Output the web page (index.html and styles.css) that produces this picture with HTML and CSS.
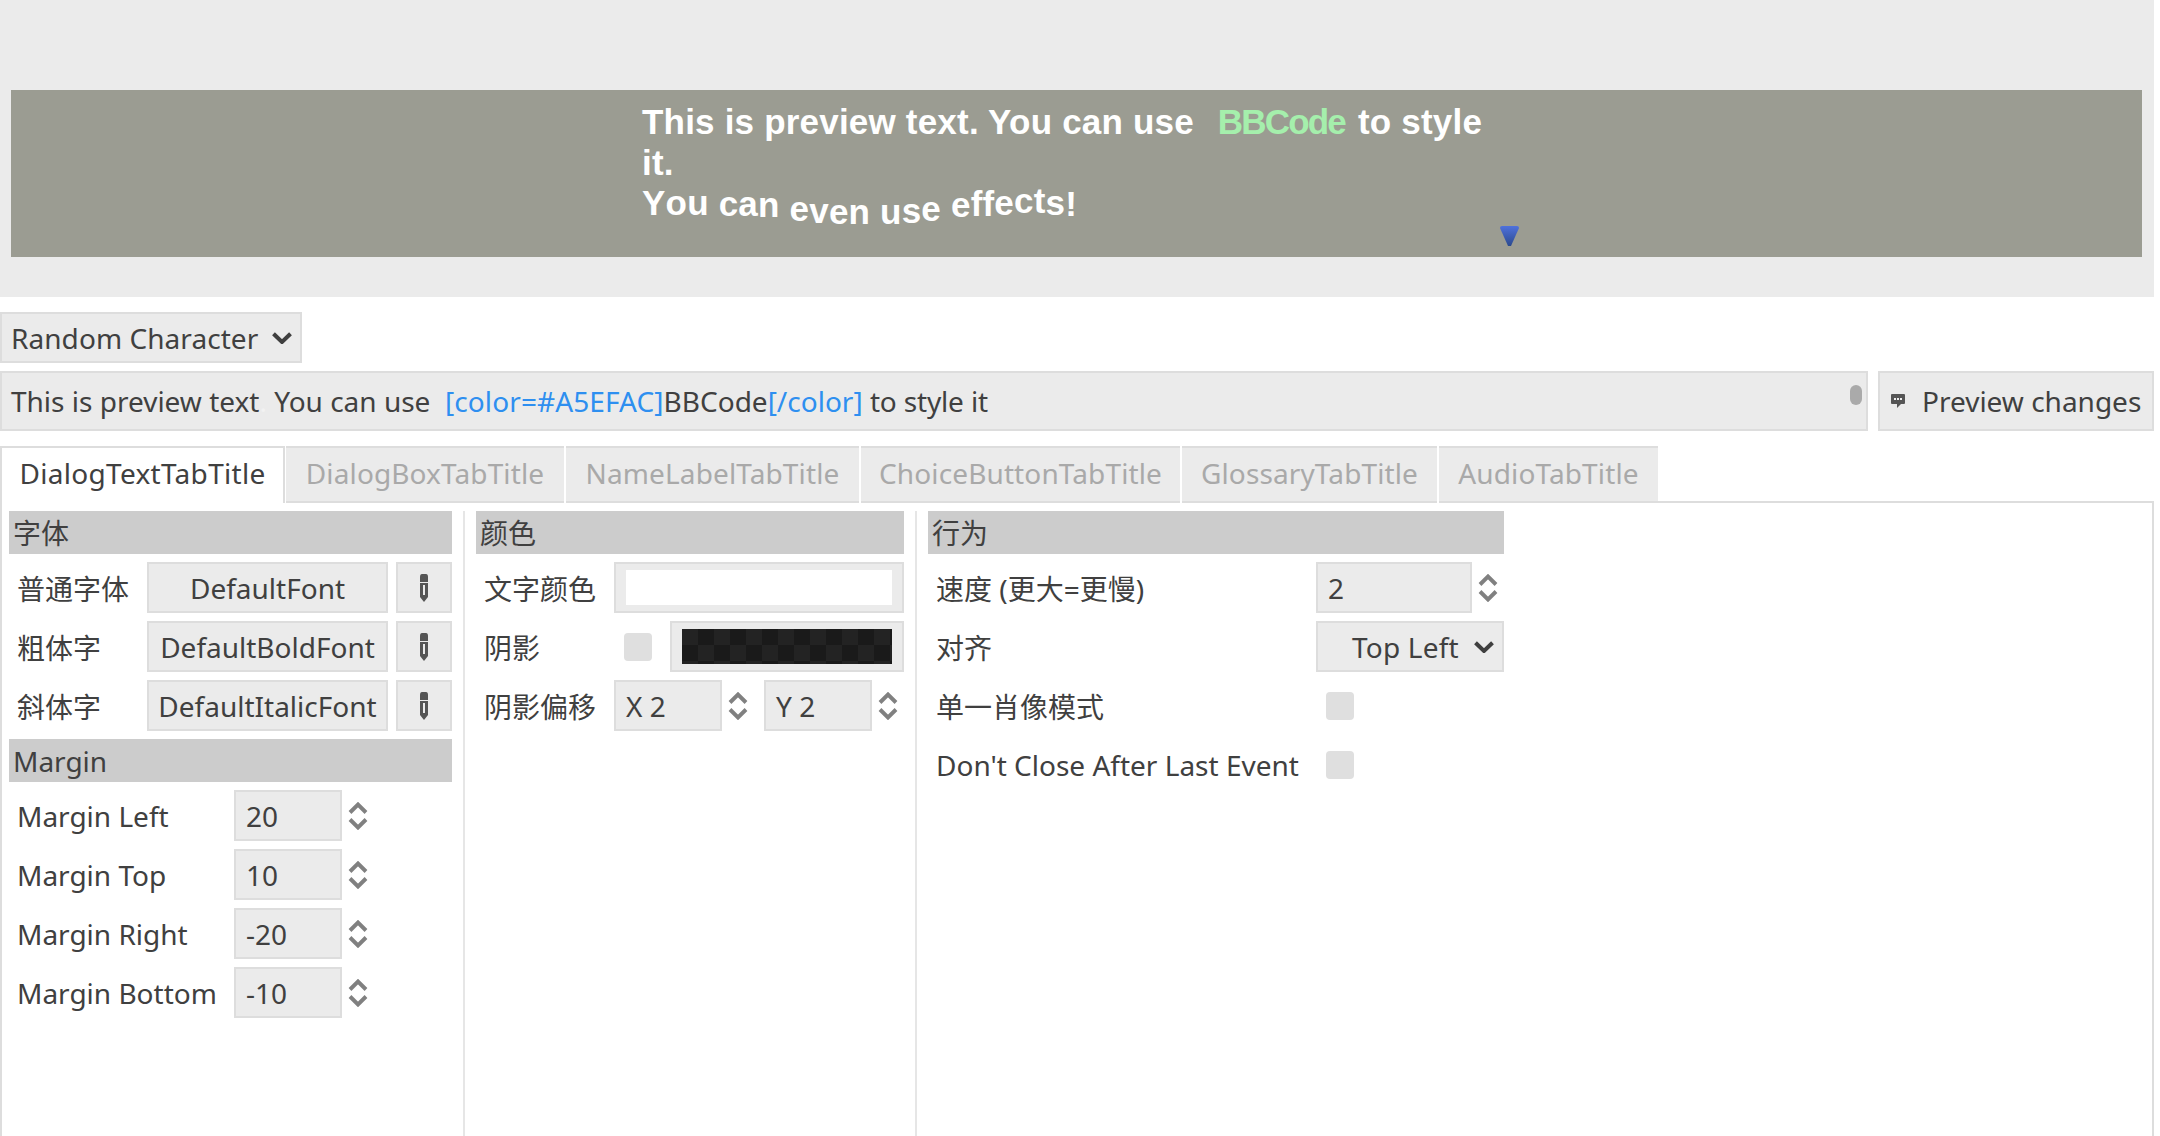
FILE: index.html
```html
<!DOCTYPE html>
<html lang="zh">
<head>
<meta charset="utf-8">
<title>Style Editor</title>
<link rel="stylesheet" href="styles.css">
</head>
<body>
<svg class="defs" width="0" height="0">
  <symbol id="spin" viewBox="0 0 20 28"><path d="M2 10.5 10 2.5 18 10.5M2 17.5 10 25.5 18 17.5" fill="none" stroke="#808080" stroke-width="3.9"/></symbol>
  <symbol id="chev" viewBox="0 0 20 12"><path d="M1.5 1.8 10 10 18.5 1.8" fill="none" stroke="#3f3f3f" stroke-width="4"/></symbol>
  <symbol id="pen" viewBox="0 0 8 28"><path d="M0 3Q0 0 2 0H6Q8 0 8 3V8H0ZM0 9H8V23L4 28 0 23ZM3 11V21H5V11Z" fill="#555" fill-rule="evenodd"/></symbol>
</svg>
<div class="app">
  <section class="preview">
    <div class="game">
      <div class="game-text">
        <div class="gl">This is preview text. You can use&nbsp; <span class="green">BBCode</span> to style</div>
        <div class="gl">it.</div>
        <div class="gl"><span class="d0">Y</span><span class="d0">o</span><span class="d0">u</span> <span class="d1">c</span><span class="d1">a</span><span class="d2">n</span> <span class="d5">e</span><span class="d7">v</span><span class="d8">e</span><span class="d8">n</span> <span class="d8">u</span><span class="d7">s</span><span class="d5">e</span> <span class="d2">e</span><span class="d1">f</span><span class="d1">f</span><span class="d0">e</span><span class="dm">c</span><span class="dm">t</span><span class="d0">s</span><span class="d1">!</span></div>
      </div>
      <svg class="caret" width="21" height="20" viewBox="0 0 21 20"><defs><linearGradient id="cg" x1="0" y1="0" x2="0" y2="1"><stop offset="0" stop-color="#4f71dc"/><stop offset="1" stop-color="#2b4a8e"/></linearGradient></defs><path d="M1 2Q1 0 3 0H18Q20 0 20 2L12 20H9Z" fill="url(#cg)"/></svg>
    </div>
  </section>

  <div class="char-row">
    <button class="ctl char-select">Random Character<svg class="chev" width="20" height="12"><use href="#chev"/></svg></button>
  </div>

  <div class="edit-row">
    <div class="ctl code-edit">
      <span>This is preview text<span class="dot">.</span> You can use&nbsp; <span class="blue wide">[color=#A5EFAC]</span>BBCode<span class="blue">[/color]</span> <span class="tail">to style it</span></span>
      <i class="grabber"></i>
    </div>
    <button class="ctl preview-btn">
      <svg width="14" height="14" viewBox="0 0 14 14"><path d="M1 0H13Q14 0 14 1V9Q14 10 13 10H10L6 14V10H1Q0 10 0 9V1Q0 0 1 0Z" fill="#555"/><path d="M3 4h2v2H3zM6 4h2v2H6zM9 4h2v2H9z" fill="#eee"/></svg>
      Preview changes
    </button>
  </div>

  <div class="tabs">
    <div class="tab active">DialogTextTabTitle</div>
    <div class="tab t2">DialogBoxTabTitle</div>
    <div class="tab t3">NameLabelTabTitle</div>
    <div class="tab t4">ChoiceButtonTabTitle</div>
    <div class="tab t5">GlossaryTabTitle</div>
    <div class="tab t6">AudioTabTitle</div>
    <div class="tab-fill"></div>
  </div>

  <div class="panel">
    <div class="col col1">
      <h2 class="head">字体</h2>
      <div class="row"><label class="lab w-font">普通字体</label><button class="ctl font-btn">DefaultFont</button><button class="ctl pen-btn"><svg width="8" height="28"><use href="#pen"/></svg></button></div>
      <div class="row"><label class="lab w-font">粗体字</label><button class="ctl font-btn">DefaultBoldFont</button><button class="ctl pen-btn"><svg width="8" height="28"><use href="#pen"/></svg></button></div>
      <div class="row"><label class="lab w-font">斜体字</label><button class="ctl font-btn">DefaultItalicFont</button><button class="ctl pen-btn"><svg width="8" height="28"><use href="#pen"/></svg></button></div>
      <h2 class="head">Margin</h2>
      <div class="row"><label class="lab w-margin">Margin Left</label><div class="ctl num">20</div><svg class="spin" width="20" height="28"><use href="#spin"/></svg></div>
      <div class="row"><label class="lab w-margin">Margin Top</label><div class="ctl num">10</div><svg class="spin" width="20" height="28"><use href="#spin"/></svg></div>
      <div class="row"><label class="lab w-margin">Margin Right</label><div class="ctl num">-20</div><svg class="spin" width="20" height="28"><use href="#spin"/></svg></div>
      <div class="row"><label class="lab w-margin">Margin Bottom</label><div class="ctl num">-10</div><svg class="spin" width="20" height="28"><use href="#spin"/></svg></div>
    </div>
    <div class="sep"></div>
    <div class="col col2">
      <h2 class="head">颜色</h2>
      <div class="row"><label class="lab w-color">文字颜色</label><button class="ctl swatch-btn grow"><span class="swatch white"></span></button></div>
      <div class="row"><label class="lab w-shadow">阴影</label><span class="check"></span><button class="ctl swatch-btn shadow-btn"><span class="swatch dark"></span></button></div>
      <div class="row"><label class="lab w-color">阴影偏移</label><div class="ctl num">X 2</div><svg class="spin" width="20" height="28"><use href="#spin"/></svg><div class="ctl num second">Y 2</div><svg class="spin" width="20" height="28"><use href="#spin"/></svg></div>
    </div>
    <div class="sep"></div>
    <div class="col col3">
      <h2 class="head">行为</h2>
      <div class="row"><label class="lab w-beh">速度 (更大=更慢)</label><div class="ctl num num-wide">2</div><svg class="spin" width="20" height="28"><use href="#spin"/></svg></div>
      <div class="row"><label class="lab w-beh">对齐</label><button class="ctl align-select">Top Left<svg class="chev" width="20" height="12"><use href="#chev"/></svg></button></div>
      <div class="row"><label class="lab w-beh">单一肖像模式</label><span class="check beh"></span></div>
      <div class="row"><label class="lab w-beh">Don't Close After Last Event</label><span class="check beh"></span></div>
    </div>
  </div>
</div>
</body>
</html>
```
FILE: styles.css
```css
* { box-sizing: border-box; }
html, body { margin: 0; padding: 0; background: #fff; overflow: hidden; }
body { font-family: "Noto Sans", "Noto Sans CJK SC", sans-serif; font-size: 28px; color: #404040; }
.defs { position: absolute; }
.app { width: 2154px; height: 1136px; display: flex; flex-direction: column; overflow: hidden; }

.preview { height: 297px; flex: none; background: #ebebeb; padding: 90px 12px 40px 11px; }
.game { position: relative; height: 167px; background: #9b9c92; padding: 11px 0 0 631px; overflow: hidden; }
.game-text { font-family: "Liberation Sans", sans-serif; font-size: 35px; font-weight: 700; letter-spacing: 0.2px; color: #fff; }
.gl { height: 41px; line-height: 41px; white-space: pre-wrap; }
.gl span { display: inline-block; white-space: pre; }
.green { color: #a5efac; letter-spacing: -1.8px; margin: 0 3px 0 4px; }
.d0 { transform: translateY(-1px); }
.dm { transform: translateY(-3px); }
.d1 { transform: translateY(0); }
.d2 { transform: translateY(1px); }
.d5 { transform: translateY(5px); }
.d7 { transform: translateY(7px); }
.d8 { transform: translateY(8px); }
.caret { position: absolute; left: 1488px; top: 136px; }

.ctl { background: #ebebeb; border: 2px solid #dddddd; border-radius: 0; color: #404040; font: inherit; display: flex; align-items: center; padding: 0; margin: 0; white-space: nowrap; }

.char-row { flex: none; display: flex; margin-top: 15px; }
.char-select { width: 302px; height: 51px; padding-left: 9px; letter-spacing: 0.06px; }
.chev { flex: none; }
.char-select .chev { margin-left: auto; margin-right: 8px; }

.edit-row { flex: none; display: flex; gap: 10px; margin-top: 8px; height: 60px; }
.code-edit { position: relative; width: 1868px; padding-left: 9px; }
.blue { color: #2e8ff0; }
.wide { letter-spacing: 0.1px; }
.tail { letter-spacing: -0.16px; }
.dot { color: #f2f2f2; }
.grabber { position: absolute; left: 1848px; top: 12px; width: 12px; height: 20px; border-radius: 6px; background: #aaaaaa; }
.preview-btn { width: 276px; padding-left: 11px; gap: 17px; }
.preview-btn svg { flex: none; }

.tabs { flex: none; display: flex; margin-top: 15px; height: 57px; }
.tab { background: #ebebeb; border-top: 2px solid #dddddd; color: #a9a9a9; display: flex; align-items: center; justify-content: center; margin-right: 2px; border-bottom: 2px solid #dddddd; padding-bottom: 3px; letter-spacing: 0.12px; }
.tab.active { width: 285px; background: #fff; color: #404040; border-left: 2px solid #dddddd; border-right: 2px solid #dddddd; border-bottom: 0; margin-right: 1px; padding-bottom: 5px; letter-spacing: 0.3px; }
.t2 { width: 278px; } .t3 { width: 293px; } .t4 { width: 319px; } .t5 { width: 255px; } .t6 { width: 219px; margin-right: 0; }
.tab-fill { flex: 1; border-bottom: 2px solid #dddddd; }

.panel { flex: 1; display: flex; align-items: stretch; border-left: 2px solid #dddddd; border-right: 2px solid #dddddd; padding: 8px 0 0 7px; min-height: 0; }
.sep { flex: none; width: 2px; background: #e6e6e6; margin: 0 11px; height: 700px; }
.col { flex: none; display: flex; flex-direction: column; gap: 8px; }
.col1 { width: 443px; }
.col2 { width: 428px; }
.col3 { width: 576px; margin-left: 0; }
.head { margin: 0; height: 43px; background: #cccccc; font: inherit; font-weight: 400; line-height: 45px; padding-left: 4px; }
.row { display: flex; align-items: center; height: 51px; }
.lab { flex: none; padding-left: 8px; white-space: nowrap; }
.w-font { width: 138px; }
.w-margin { width: 225px; }
.w-color { width: 138px; }
.w-shadow { width: 148px; }
.w-beh { width: 388px; }
.font-btn { width: 241px; height: 51px; justify-content: center; }
.pen-btn { width: 56px; height: 51px; margin-left: 8px; justify-content: center; }
.num { width: 108px; height: 51px; padding-left: 10px; }
.num.second { margin-left: 16px; }
.num-wide { width: 156px; }
.spin { flex: none; margin-left: 6px; }
.swatch-btn { height: 51px; padding: 6px 10px; }
.grow { width: 290px; }
.shadow-btn { width: 234px; margin-left: 18px; }
.swatch { display: block; width: 100%; height: 35px; }
.white { background: #fff; }
.dark { background-color: #1a1a1a; background-image: conic-gradient(#1a1a1a 25%, #232323 0 50%, #1a1a1a 0 75%, #232323 0); background-size: 32px 32px; }
.check { flex: none; width: 28px; height: 28px; background: #dfdfdf; border-radius: 4px; }
.check.beh { margin-left: 10px; }
.align-select { width: 188px; height: 51px; padding-left: 34px; letter-spacing: 0.2px; }
.align-select .chev { margin-left: auto; margin-right: 8px; }
```
